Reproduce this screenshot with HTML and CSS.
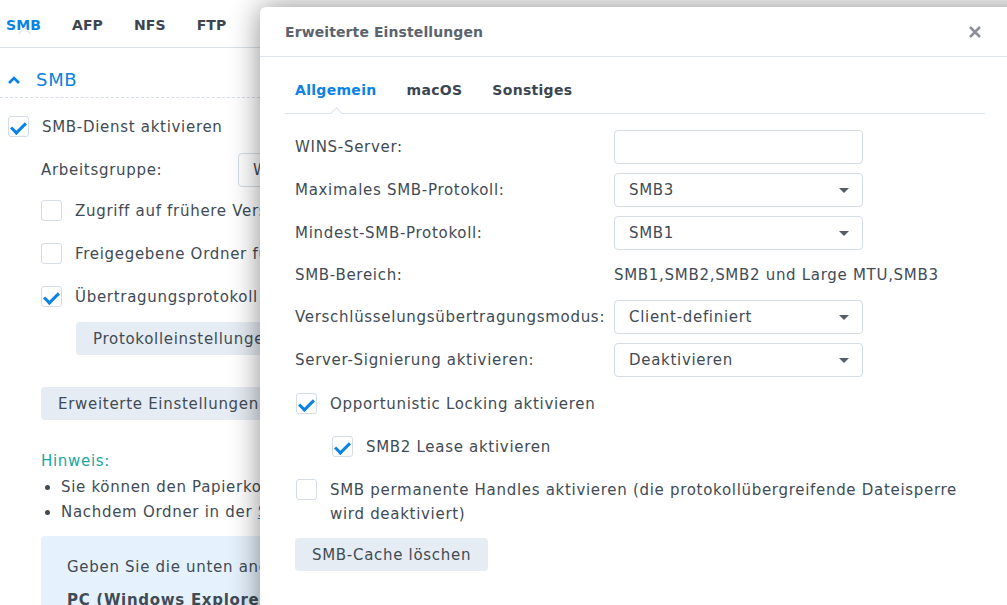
FILE: index.html
```html
<!DOCTYPE html>
<html lang="de">

<head>
  <meta charset="UTF-8" />
  <title>SMB – Erweiterte Einstellungen</title>
  <link rel="stylesheet" href="styles.css">
</head>

<body>

  <div class="page">
    <div class="tabs main-tabs">
      <span class="tab active">SMB</span>
      <span class="tab">AFP</span>
      <span class="tab">NFS</span>
      <span class="tab">FTP</span>
    </div>

    <div class="section-head">
      <svg class="chevron" width="14" height="10" viewBox="0 0 14 10">
        <path d="M2 8 L7 3 L12 8" fill="none" stroke="#057feb" stroke-width="2.6" />
      </svg>
      <span>SMB</span>
    </div>

    <div class="panel">
      <label class="check-row top">
        <span class="box checked"></span>
        <span>SMB-Dienst aktivieren</span>
      </label>

      <div class="indent">
        <div class="field-row">
          <span class="field-label">Arbeitsgruppe:</span>
          <span class="input">WORKGROUP</span>
        </div>

        <label class="check-row">
          <span class="box"></span>
          <span>Zugriff auf frühere Versionen aktivieren</span>
        </label>
        <label class="check-row">
          <span class="box"></span>
          <span>Freigegebene Ordner für die Suche ausblenden</span>
        </label>
        <label class="check-row">
          <span class="box checked"></span>
          <span>Übertragungsprotokoll aktivieren</span>
        </label>
        <button class="btn sub">Protokolleinstellungen</button>

        <button class="btn adv">Erweiterte Einstellungen</button>

        <div class="hint">Hinweis:</div>
        <ul class="notes">
          <li>Sie können den Papierkorb für jeden freigegebenen Ordner aktivieren.</li>
          <li>Nachdem Ordner in der <a href="#">Systemsteuerung</a> freigegeben wurden.</li>
        </ul>

        <div class="info-box">
          <p>Geben Sie die unten angegebene Adresse ein, um auf den Server zuzugreifen:</p>
          <p class="strong">PC (Windows Explorer):</p>
        </div>
      </div>
    </div>
  </div>

  <div class="dialog">
    <div class="dialog-head">
      <span class="dialog-title">Erweiterte Einstellungen</span>
      <svg class="close" width="14" height="14" viewBox="0 0 14 14">
        <path d="M2 2 L12 12 M12 2 L2 12" stroke="#8a9199" stroke-width="2.6" />
      </svg>
    </div>

    <div class="dialog-body">
      <div class="tabs dialog-tabs">
        <span class="tab active">Allgemein</span>
        <span class="tab">macOS</span>
        <span class="tab">Sonstiges</span>
      </div>

      <div class="form">
        <div class="form-row">
          <span class="form-label">WINS-Server:</span>
          <span class="input wide"></span>
        </div>
        <div class="form-row">
          <span class="form-label">Maximales SMB-Protokoll:</span>
          <span class="input wide select">SMB3</span>
        </div>
        <div class="form-row">
          <span class="form-label">Mindest-SMB-Protokoll:</span>
          <span class="input wide select">SMB1</span>
        </div>
        <div class="form-row text-row">
          <span class="form-label">SMB-Bereich:</span>
          <span class="value">SMB1,SMB2,SMB2 und Large MTU,SMB3</span>
        </div>
        <div class="form-row">
          <span class="form-label">Verschlüsselungsübertragungsmodus:</span>
          <span class="input wide select">Client-definiert</span>
        </div>
        <div class="form-row">
          <span class="form-label">Server-Signierung aktivieren:</span>
          <span class="input wide select">Deaktivieren</span>
        </div>

        <div class="checks">
          <label class="check-row">
            <span class="box checked"></span>
            <span>Opportunistic Locking aktivieren</span>
          </label>
          <label class="check-row nested">
            <span class="box checked"></span>
            <span>SMB2 Lease aktivieren</span>
          </label>
          <label class="check-row last">
            <span class="box"></span>
            <span>SMB permanente Handles aktivieren (die protokollübergreifende Dateisperre wird deaktiviert)</span>
          </label>
        </div>

        <button class="btn cache">SMB-Cache löschen</button>
      </div>
    </div>
  </div>

</body>

</html>
```

FILE: styles.css
```css
:root {
  --text: #414b55;
  --blue: #0a82e6;
  --line: #d9e1ea;
  --border: #d4dce6;
  --btn-bg: #e6ecf3;
}

html,
body {
  height: 605px;
  overflow: hidden;
}

body {
  margin: 0;
  font-family: 'DejaVu Sans', Verdana, sans-serif;
  font-size: 15px;
  letter-spacing: 0.7px;
  color: var(--text);
  background: #fff;
  position: relative;
}

/* tabs */

.tabs {
  display: flex;
  border-bottom: 1px solid var(--line);
}

.tab {
  position: relative;
  font-weight: bold;
  font-size: 14px;
  letter-spacing: 0.1px;
  color: #3d4650;
}

.tab.active {
  color: var(--blue);
}

.tab.active::after {
  content: "";
  position: absolute;
  left: 50%;
  bottom: -5px;
  width: 8px;
  height: 8px;
  margin-left: -4px;
  background: #fff;
  border-left: 1px solid var(--line);
  border-top: 1px solid var(--line);
  transform: rotate(45deg);
}

.main-tabs {
  height: 48px;
  align-items: center;
  padding-left: 6px;
  gap: 31px;
  box-sizing: border-box;
  padding-top: 2px;
}

/* left page */

.page {
  width: 260px;
  overflow: hidden;
}

.section-head {
  display: flex;
  align-items: center;
  box-sizing: border-box;
  height: 50px;
  padding-top: 14px;
  border-bottom: 1px dashed #d6dde5;
  color: var(--blue);
  font-size: 18px;
}

.chevron {
  margin-left: 7px;
  margin-right: 15px;
}

.panel {
  padding: 18px 0 0 8px;
  white-space: nowrap;
}

.check-row {
  display: flex;
  align-items: flex-start;
  gap: 13px;
  line-height: 22px;
}

.box {
  flex: none;
  width: 19px;
  height: 19px;
  border: 1px solid var(--border);
  border-radius: 3px;
  background: #fff;
  position: relative;
}

.box.checked::after {
  content: "";
  position: absolute;
  left: 3px;
  top: 2px;
  width: 12px;
  height: 6px;
  border-left: 3px solid var(--blue);
  border-bottom: 3px solid var(--blue);
  transform: translate(-1px, 3px) rotate(-45deg);
  transform-origin: center;
}

.indent {
  padding-left: 33px;
}

.panel .check-row {
  margin-top: 21px;
}

.panel .check-row.top {
  margin-top: 0;
}

.panel .field-row + .check-row {
  margin-top: 13px;
}

.field-row {
  display: flex;
  align-items: center;
  margin-top: 15px;
}

.field-label {
  width: 197px;
  flex: none;
}

.input {
  flex: none;
  box-sizing: border-box;
  height: 34px;
  border: 1px solid var(--border);
  border-radius: 4px;
  padding: 0 14px;
  display: flex;
  align-items: center;
  background: #fff;
  width: 249px;
}

.btn {
  display: block;
  font-family: inherit;
  font-size: 15px;
  letter-spacing: 0.7px;
  color: var(--text);
  background: var(--btn-bg);
  border: none;
  border-radius: 4px;
  height: 33px;
  padding: 0 17px;
  white-space: nowrap;
}

.btn.sub {
  margin: 14px 0 0 35px;
}

.btn.adv {
  margin-top: 32px;
}

.hint {
  margin-top: 31px;
  color: #1aa6a6;
  line-height: 20px;
}

.notes {
  margin: 4px 0 0;
  padding: 0 0 0 20px;
  line-height: 25px;
}

.notes a {
  color: var(--blue);
}

.info-box {
  margin-top: 11px;
  background: #e5f1fc;
  border-radius: 4px;
  padding: 22px 26px;
  width: 600px;
}

.info-box p {
  margin: 0 0 15px;
}

.info-box .strong {
  font-weight: bold;
}

/* dialog */

.dialog {
  position: absolute;
  left: 260px;
  top: 7px;
  width: 790px;
  height: 640px;
  background: #fff;
  border-radius: 6px 0 0 0;
  box-shadow: 0 0 30px rgba(0, 0, 0, 0.45);
}

.dialog-head {
  height: 49px;
  border-bottom: 1px solid #dfe5ec;
  display: flex;
  align-items: center;
  justify-content: space-between;
  padding: 0 68px 0 25px;
}

.dialog-title {
  font-weight: bold;
  font-size: 14px;
  letter-spacing: 0.1px;
  color: #5b646e;
}

.dialog-body {
  padding: 22px 0 0 25px;
  width: 700px;
}

.dialog-tabs {
  gap: 10px;
}

.dialog-tabs .tab {
  padding: 0 10px 12px;
  line-height: 22px;
  letter-spacing: 0.3px;
}

.form {
  padding: 16px 0 0 10px;
}

.form-row {
  display: flex;
  align-items: center;
  margin-bottom: 9px;
}

.form-row.text-row {
  height: 32px;
}

.form-label {
  width: 319px;
  flex: none;
}

.select {
  position: relative;
}

.select::after {
  content: "";
  position: absolute;
  right: 13px;
  top: 14px;
  border-left: 5px solid transparent;
  border-right: 5px solid transparent;
  border-top: 5px solid #555e68;
}

.checks {
  margin-top: 15px;
}

.checks .check-row {
  line-height: 24px;
  padding-left: 1px;
  margin-bottom: 19px;
}

.checks .check-row.last {
  margin-bottom: 12px;
}

.checks .check-row .box {
  margin-top: 1px;
}

.checks .check-row.nested {
  padding-left: 37px;
}
```
